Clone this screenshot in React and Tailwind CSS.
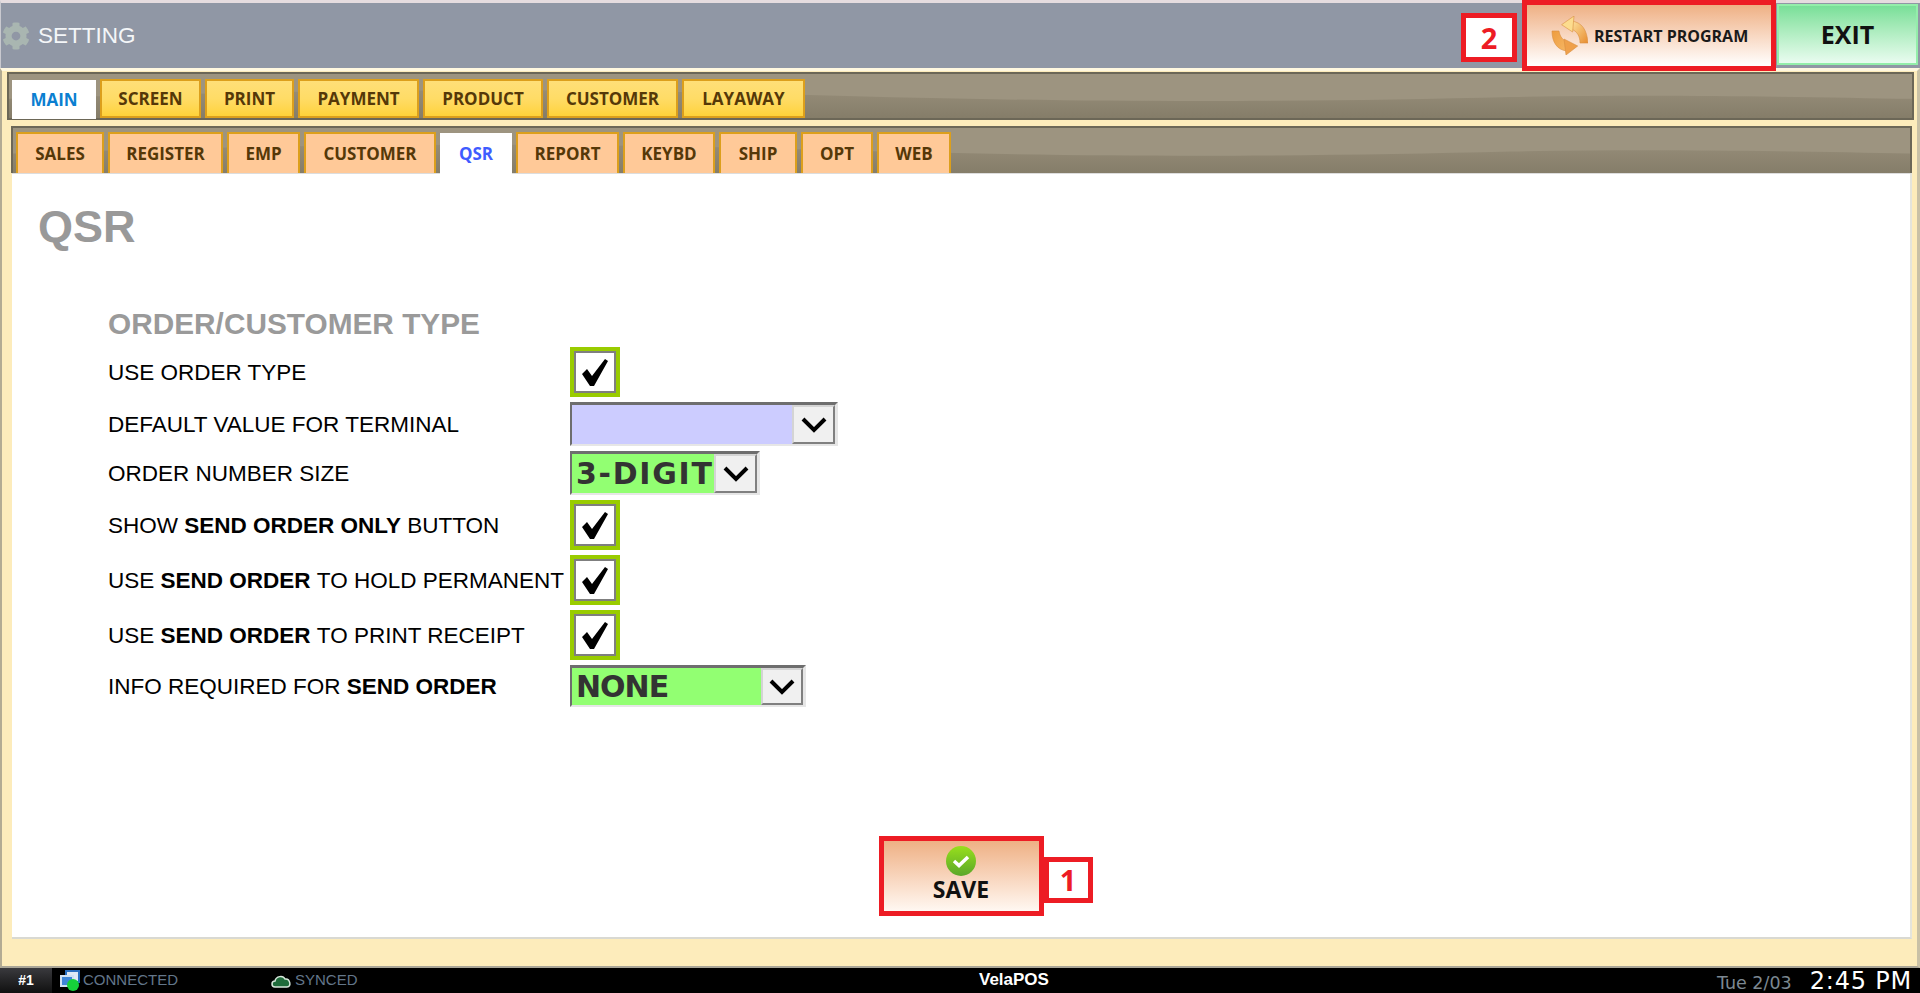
import { FaCog } from "react-icons/fa";

const mainTabs = [
  { label: "MAIN", w: "w-[84px]", active: true },
  { label: "SCREEN", w: "w-[101px]" },
  { label: "PRINT", w: "w-[89px]" },
  { label: "PAYMENT", w: "w-[121px]" },
  { label: "PRODUCT", w: "w-[120px]" },
  { label: "CUSTOMER", w: "w-[131px]" },
  { label: "LAYAWAY", w: "w-[123px]" },
];

const subTabs = [
  { label: "SALES", w: "w-[88px]" },
  { label: "REGISTER", w: "w-[115px]" },
  { label: "EMP", w: "w-[73px]" },
  { label: "CUSTOMER", w: "w-[132px]" },
  { label: "QSR", w: "w-[72px]", active: true },
  { label: "REPORT", w: "w-[103px]" },
  { label: "KEYBD", w: "w-[92px]" },
  { label: "SHIP", w: "w-[78px]" },
  { label: "OPT", w: "w-[72px]" },
  { label: "WEB", w: "w-[74px]" },
];

function Wave() {
  return (
    <svg className="absolute inset-0 w-full h-full" viewBox="0 0 1900 46" preserveAspectRatio="none">
      <defs>
        <linearGradient id="wv" x1="0" y1="0" x2="0" y2="1">
          <stop offset="0" stopColor="#958c78" />
          <stop offset="1" stopColor="#857d69" />
        </linearGradient>
      </defs>
      <path d="M0 26 C300 16 520 14 800 22 C1100 31 1300 29 1500 24 C1650 21 1800 24 1900 26 L1900 46 L0 46 Z" fill="url(#wv)" />
    </svg>
  );
}

function Check() {
  return (
    <div className="w-[50px] h-[50px] bg-[#99cc00] p-[4px] flex">
      <div className="flex-1 bg-white border-2 border-[#7f7f7f] flex items-center justify-center">
        <svg width="28" height="27" viewBox="0 0 28 27">
          <path d="M1 15 L6 10 L11 17 L24 0 L27 2 L13 27 L9 27 Z" fill="#000" />
        </svg>
      </div>
    </div>
  );
}

function Select({ w, bg, btn, children }) {
  return (
    <div className={`${w} h-full flex ${bg} border-t-[3px] border-l-2 border-[#6e6e6e] border-r-[3px] border-r-[#e6e6e6] border-b-2 border-b-[#e6e6e6]`}>
      <div className="flex-1 flex items-center pl-[4px] font-['DejaVu_Sans',sans-serif] font-bold text-[30px] text-[#333] overflow-hidden whitespace-nowrap">
        {children}
      </div>
      <div className={`${btn} bg-[#f0f0f0] border-2 border-[#808080] border-t-[#d4d4d4] border-l-[#d4d4d4] flex items-center justify-center`}>
        <svg width="26" height="18" viewBox="0 0 26 18">
          <path d="M2 3 L13 14 L24 3" fill="none" stroke="#000" strokeWidth="4" />
        </svg>
      </div>
    </div>
  );
}

function Row({ h, children, control }) {
  return (
    <div className={`flex ${h}`}>
      <div className="w-[462px] pt-[2px] flex items-center text-[22.5px] text-black whitespace-nowrap">{children}</div>
      <div className="flex items-center">{control}</div>
    </div>
  );
}

function RestartIcon() {
  return (
    <svg width="37" height="39" viewBox="0 0 37 39">
      <defs>
        <linearGradient id="ra" x1="0" y1="0" x2="1" y2="1">
          <stop offset="0" stopColor="#fde3a0" />
          <stop offset="1" stopColor="#e88c2e" />
        </linearGradient>
        <linearGradient id="rb" x1="0" y1="0" x2="1" y2="1">
          <stop offset="0" stopColor="#ee9c3e" />
          <stop offset="1" stopColor="#f6b765" />
        </linearGradient>
      </defs>
      <path d="M20 5 C31 6 36 14 37 27 L29 27 C29 20 26 15 20 13 Z" fill="url(#ra)" stroke="#d98f42" strokeWidth="0.6" />
      <path d="M10.6 8.7 L23 0 L21.6 16 Z" fill="#fcdc8e" stroke="#d98f42" strokeWidth="0.6" />
      <path d="M1 15 L8 15 C9 21 12 24 16 26 L16 35 C6 34 1 26 1 15 Z" fill="url(#rb)" stroke="#d98f42" strokeWidth="0.6" />
      <path d="M26.7 30 L13 23 L15 39 Z" fill="#efa04a" stroke="#d98f42" strokeWidth="0.6" />
    </svg>
  );
}

const bold = "font-bold";

export default function App() {
  return (
    <div className="w-[1920px] h-[993px] flex flex-col overflow-hidden font-['Liberation_Sans',Arial,sans-serif] bg-black">
      {/* title bar */}
      <div className="h-[68px] shrink-0 flex items-start bg-[#9097a5] border-t-[3px] border-t-[#e5dcdf] border-l border-l-[#c9c9cf] relative z-10">
        <div className="h-[65px] flex items-center pl-[1px]">
          <FaCog className="text-[#a9b6b1] w-[28px] h-[28px]" />
          <span className="ml-[8px] text-[22.5px] text-[#f4f6f8]">SETTING</span>
        </div>
        <div className="ml-auto flex items-start">
          <div className="mt-[10px] mr-[5px] w-[56px] h-[49px] bg-white border-[5px] border-[#ed1c24] flex items-center justify-center font-['Noto_Sans',sans-serif] font-bold text-[29px] text-[#ed1c24]">
            2
          </div>
          <div className="-mt-[3px] h-[71px] w-[254px] border-[5px] border-[#ed1c24] bg-gradient-to-b from-[#eeb084] to-white flex items-center pl-[24px]">
            <RestartIcon />
            <span className="ml-[6px] font-['Open_Sans',sans-serif] font-bold text-[16px] text-[#1a1a1a] whitespace-nowrap">RESTART PROGRAM</span>
          </div>
          <div className="mt-[1px] ml-[1px] mr-[2px] w-[141px] h-[61px] border-2 border-[#93eeaa] bg-gradient-to-b from-[#78df98] to-[#e9fcf0] flex items-center justify-center font-['Open_Sans',sans-serif] font-bold text-[25px] text-[#111]">
            EXIT
          </div>
        </div>
      </div>

      {/* settings panel */}
      <div className="flex-1 flex flex-col bg-[#fdecbb] border-t-[3px] border-t-[#fff8e0] border-l-[2px] border-l-[#b3ab93] border-r-[3px] border-r-[#c9c1a6] border-b-2 border-b-[#a9a597] pt-[1px] pl-[5px] pr-[3px]">
        <div className="relative h-[48px] shrink-0 flex items-end gap-[4px] pl-[3px] bg-[#9d9480] border-2 border-[#6c6757]">
          <Wave />
          {mainTabs.map((t) =>
            t.active ? (
              <div key={t.label} className={`relative ${t.w} h-[39px] -mb-[1px] bg-white flex items-center justify-center font-['Open_Sans',sans-serif] font-bold text-[17px] text-[#0b7fd1]`}>
                {t.label}
              </div>
            ) : (
              <div key={t.label} className={`relative ${t.w} h-[39px] border-2 border-[#dc9f1c] bg-gradient-to-b from-[#ffdf78] via-[#ffdc66] to-[#ffd238] flex items-center justify-center font-['Open_Sans',sans-serif] font-bold text-[17px] text-[#553808]`}>
                {t.label}
              </div>
            )
          )}
        </div>

        <div className="flex-1 flex flex-col mt-[6px] ml-[4px] mr-[2px]">
          <div className="relative h-[47px] shrink-0 flex items-end gap-[4px] pl-[3px] bg-[#9d9480] border-t-2 border-l-2 border-r-2 border-[#6c6757]">
            <Wave />
            {subTabs.map((t) =>
              t.active ? (
                <div key={t.label} className={`relative ${t.w} h-[41px] -mb-[1px] bg-white flex items-center justify-center font-['Open_Sans',sans-serif] font-bold text-[17px] text-[#3f5cff]`}>
                  {t.label}
                </div>
              ) : (
                <div key={t.label} className={`relative ${t.w} h-[41px] border-t-2 border-l-2 border-r-2 border-[#dc9f1c] bg-[#ffc998] flex items-center justify-center font-['Open_Sans',sans-serif] font-bold text-[17px] text-[#553808]`}>
                  {t.label}
                </div>
              )
            )}
          </div>

          <div className="flex flex-col h-[766px] ml-[1px] bg-white border-t border-t-[#dddddd] border-r-2 border-r-[#e4e4dc] border-b-2 border-b-[#d9d9d2]">
            <h1 className="mt-[31px] ml-[26px] text-[45px] leading-[44px] font-bold text-[#999999]">QSR</h1>
            <div className="mt-[60px] ml-[96px] text-[29.8px] leading-[30px] font-bold text-[#9a9a9a]">ORDER/CUSTOMER TYPE</div>
            <div className="mt-[8px] ml-[96px] flex flex-col gap-[5px]">
              <Row h="h-[50px]" control={<Check />}>USE ORDER TYPE</Row>
              <Row h="h-[44px]" control={<Select w="w-[268px]" bg="bg-[#ccccff]" btn="w-[43px]" />}>DEFAULT VALUE FOR TERMINAL</Row>
              <Row h="h-[44px]" control={<Select w="w-[190px]" bg="bg-[#92ff72]" btn="w-[43px]"><span className="tracking-[1.7px]">3-DIGIT</span></Select>}>ORDER NUMBER SIZE</Row>
              <Row h="h-[50px]" control={<Check />}>SHOW&nbsp;<span className={bold}>SEND ORDER ONLY</span>&nbsp;BUTTON</Row>
              <Row h="h-[50px]" control={<Check />}>USE&nbsp;<span className={bold}>SEND ORDER</span>&nbsp;TO HOLD PERMANENT</Row>
              <Row h="h-[50px]" control={<Check />}>USE&nbsp;<span className={bold}>SEND ORDER</span>&nbsp;TO PRINT RECEIPT</Row>
              <Row h="h-[42px]" control={<Select w="w-[236px]" bg="bg-[#92ff72]" btn="w-[42px]"><span className="tracking-[-1px]">NONE</span></Select>}>INFO REQUIRED FOR&nbsp;<span className={bold}>SEND ORDER</span></Row>
            </div>
            <div className="mt-auto mb-[21px] self-center relative w-[165px] h-[80px] border-[5px] border-[#ed1c24] bg-gradient-to-b from-[#eeb084] to-[#fff8f2] flex flex-col items-center pt-[5px]">
              <svg width="30" height="30" viewBox="0 0 30 30">
                <defs>
                  <linearGradient id="sv" x1="0" y1="0" x2="0" y2="1">
                    <stop offset="0" stopColor="#98df1c" />
                    <stop offset="1" stopColor="#5aa72a" />
                  </linearGradient>
                </defs>
                <circle cx="15" cy="15" r="15" fill="url(#sv)" />
                <path d="M8 15 L13 19.5 L22 11" fill="none" stroke="#fff" strokeWidth="3.5" />
              </svg>
              <span className="font-['Open_Sans',sans-serif] font-bold text-[23px] leading-[26px] text-[#111]">SAVE</span>
              <div className="absolute left-full ml-[5px] top-[16px] w-[49px] h-[46px] bg-white border-[5px] border-[#ed1c24] flex items-center justify-center font-['Noto_Sans',sans-serif] font-bold text-[29px] text-[#ed1c24]">
                1
              </div>
            </div>
          </div>
        </div>
      </div>

      {/* status bar */}
      <div className="h-[25px] shrink-0 relative flex items-center bg-black overflow-hidden">
        <div className="w-[52px] h-full bg-gradient-to-b from-[#3a3a3e] to-[#111] flex items-center justify-center text-[14px] font-bold text-white">#1</div>
        <svg className="ml-[8px]" width="20" height="22" viewBox="0 0 20 22">
          <rect x="6" y="1" width="13" height="11" fill="#dfe9f5" stroke="#2a6fc0" strokeWidth="2" />
          <rect x="1" y="6" width="12" height="10" fill="#3f86d8" stroke="#cfe0f2" strokeWidth="2" />
          <circle cx="13" cy="15" r="6" fill="#16d03a" />
        </svg>
        <span className="ml-[3px] text-[15px] text-[#63768a]">CONNECTED</span>
        <svg className="ml-[93px]" width="21" height="16" viewBox="0 0 21 16">
          <path d="M4 14 C0 14 0 8 4 8 C5 3 12 2 14 6 C19 5 21 14 16 14 Z" fill="#1f6b3b" stroke="#d8e8dc" strokeWidth="1.5" />
        </svg>
        <span className="ml-[3px] text-[15px] text-[#63768a]">SYNCED</span>
        <span className="absolute left-[979px] top-[1px] text-[17px] leading-[22px] font-bold text-white">VelaPOS</span>
        <div className="ml-auto flex items-center pr-[8px] font-['DejaVu_Sans',sans-serif] whitespace-nowrap">
          <span className="text-[17.5px] leading-[20px] text-[#7c8892] mt-[4px]">Tue 2/03</span>
          <span className="ml-[18px] text-[24px] leading-[24px] tracking-[0.8px] text-white">2:45 PM</span>
        </div>
      </div>
    </div>
  );
}
